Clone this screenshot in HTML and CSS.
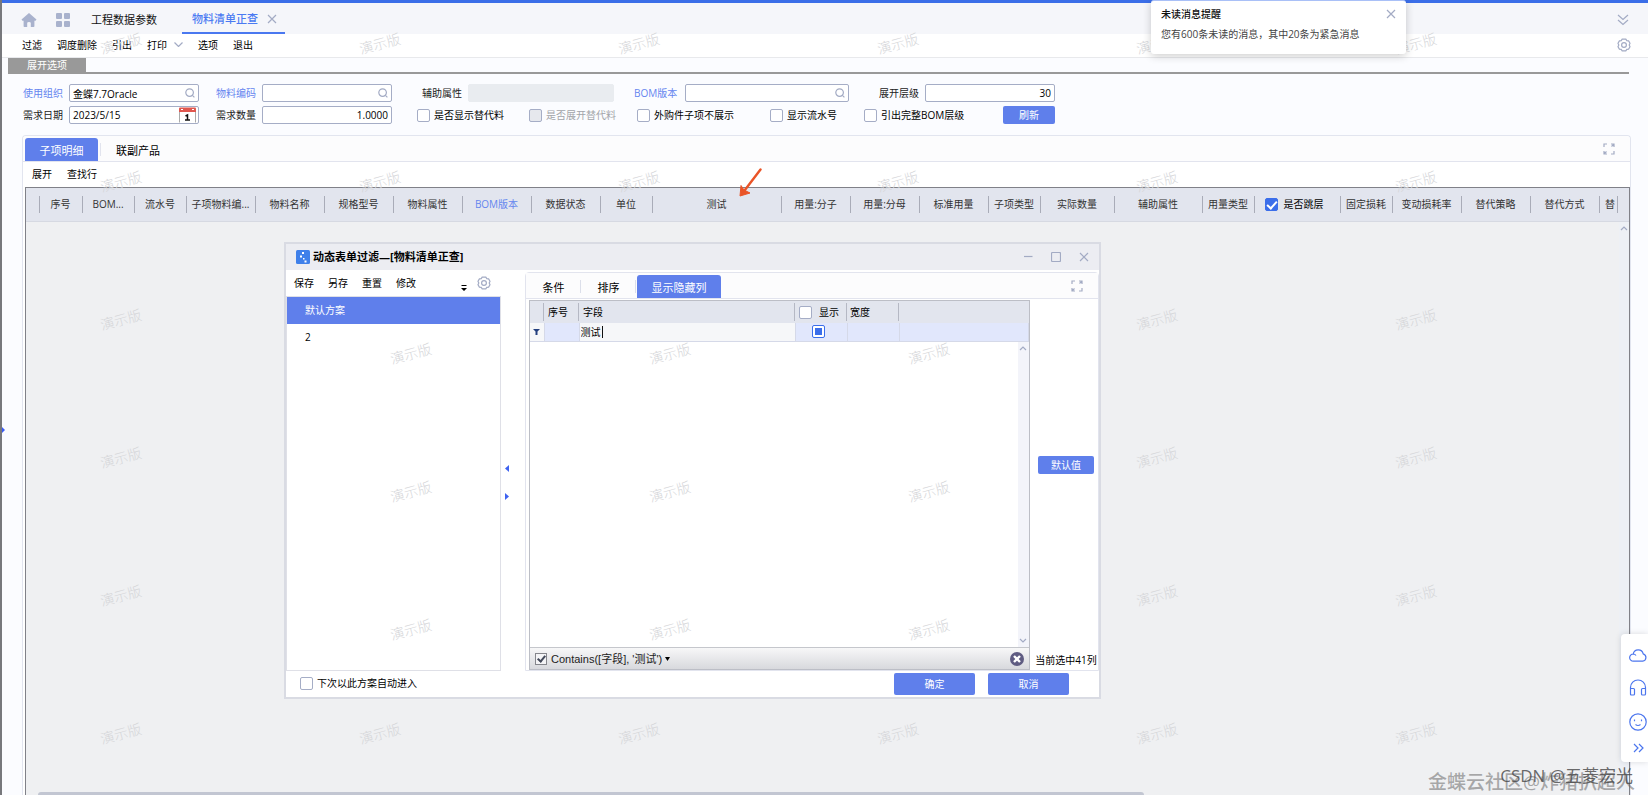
FILE: index.html
```html
<!DOCTYPE html>
<html lang="zh-CN">
<head>
<meta charset="utf-8">
<title>物料清单正查</title>
<link rel="stylesheet" href="styles.css">
</head>
<body>
<svg class="defs" aria-hidden="true">
  <symbol id="i-search" viewBox="0 0 10 10"><circle cx="4.6" cy="4.6" r="3.8"/><path d="M7.4 7.4 9.4 9.4"/></symbol>
  <symbol id="i-x" viewBox="0 0 10 10"><path d="M1 1 9 9M9 1 1 9"/></symbol>
  <symbol id="i-gear" viewBox="0 0 14 14"><path d="M5.2 1.2h3.6l1 1.5 1.8.2 1.4 2.4-.8 1.7.8 1.7-1.4 2.4-1.8.2-1 1.5H5.2l-1-1.5-1.8-.2L1 8.7 1.8 7 1 5.3l1.4-2.4 1.8-.2z"/><circle cx="7" cy="7" r="2.4"/></symbol>
  <symbol id="i-expand" viewBox="0 0 12 12"><path d="M1 4V1h3M8 1h3v3M11 1 8.500 3.500M1 8v3h3M1 11l2.500-2.500M8 11h3V8"/></symbol>
</svg>
<div class="app">
  <header class="tabbar">
    <button class="icon-btn home" aria-label="首页"><svg width="16" height="14" viewBox="0 0 16 14"><path d="M8 0 15.500 6.600 14.600 7.800H13.400V13.200Q13.400 14 12.600 14H9.800V10Q9.800 9 8 9T6.200 10V14H3.400Q2.600 14 2.600 13.200V7.800H1.400L.5 6.600z" fill="#a9b2cd"/></svg></button>
    <button class="icon-btn apps" aria-label="应用"><svg width="14" height="14" viewBox="0 0 14 14" fill="#a9b2cd"><rect width="6" height="6" rx="1"/><rect x="8" width="6" height="6" rx="1"/><rect y="8" width="6" height="6" rx="1"/><rect x="8" y="8" width="6" height="6" rx="1"/></svg></button>
    <a href="#" class="page-tab">工程数据参数</a>
    <div class="page-tab current"><a href="#">物料清单正查</a><button class="icon-btn" aria-label="关闭"><svg class="ln" width="10" height="10"><use href="#i-x"/></svg></button></div>
    <button class="icon-btn end" aria-label="收起"><svg class="ln" width="12" height="12" viewBox="0 0 12 12"><path d="M1 1l5 4.500L11 1M1 6l5 4.500L11 6"/></svg></button>
  </header>
  <nav class="toolbar">
    <button>过滤</button><button>调度删除</button><button>引出</button>
    <button class="menu">打印<svg class="ln" width="9" height="5" viewBox="0 0 9 5"><path d="M.5.5l4 4 4-4"/></svg></button>
    <button>选项</button><button>退出</button>
    <button class="icon-btn end" aria-label="设置"><svg class="ln" width="14" height="14"><use href="#i-gear"/></svg></button>
  </nav>
  <h2 class="section"><span>展开选项</span></h2>
  <form class="filters">
    <div class="field"><label class="link" for="org">使用组织</label><span class="box"><input id="org" value="金蝶7.7Oracle"><svg class="ln" width="10" height="10"><use href="#i-search"/></svg></span></div>
    <div class="field"><label class="link" for="code">物料编码</label><span class="box"><input id="code"><svg class="ln" width="10" height="10"><use href="#i-search"/></svg></span></div>
    <div class="field aux"><label for="aux">辅助属性</label><span class="box off"><input id="aux" disabled></span></div>
    <div class="field bom"><label class="link" for="bom">BOM版本</label><span class="box"><input id="bom"><svg class="ln" width="10" height="10"><use href="#i-search"/></svg></span></div>
    <div class="field level"><label for="lvl">展开层级</label><span class="box num"><input id="lvl" value="30"></span></div>
    <div class="field"><label for="date">需求日期</label><span class="box date"><input id="date" value="2023/5/15"><svg width="17" height="16" viewBox="0 0 17 16"><path d="M.5 4V15.500M16.500 4V15.500" stroke="#aaa" stroke-width="1"/><path d="M0 1.500Q0 .5 1 .5H16Q17 .5 17 1.500V5H0z" fill="#e0574f"/><path d="M2 2.500h2M13 2.500h2" stroke="#fff"/><path d="M6.500 9 8.500 8V13M6 13h5" stroke="#111" stroke-width="1.500" fill="none"/></svg></span></div>
    <div class="field"><label for="qty">需求数量</label><span class="box num"><input id="qty" value="1.0000"></span></div>
    <label class="check"><input type="checkbox">是否显示替代料</label>
    <label class="check off"><input type="checkbox" disabled>是否展开替代料</label>
    <label class="check"><input type="checkbox">外购件子项不展示</label>
    <label class="check"><input type="checkbox">显示流水号</label>
    <label class="check"><input type="checkbox">引出完整BOM层级</label>
    <button type="button" class="primary">刷新</button>
  </form>
  <main class="panel">
    <div class="panel-tabs"><button class="tab on">子项明细</button><button class="tab">联副产品</button>
      <button class="icon-btn end" aria-label="全屏"><svg class="ln" width="12" height="12"><use href="#i-expand"/></svg></button></div>
    <div class="panel-tools"><button>展开</button><button>查找行</button></div>
    <div class="sheet">
      <table class="cols">
        <colgroup><col class="w14"><col class="w43"><col class="w52"><col class="w52"><col class="w69"><col class="w69"><col class="w69"><col class="w69"><col class="w69"><col class="w69"><col class="w52"><col class="w129"><col class="w69"><col class="w69"><col class="w69"><col class="w52"><col class="w74"><col class="w88"><col class="w52"><col class="w86"><col class="w52"><col class="w69"><col class="w69"><col class="w69"><col class="w18"><col></colgroup>
        <thead><tr><th></th><th>序号</th><th>BOM...</th><th>流水号</th><th>子项物料编...</th><th>物料名称</th><th>规格型号</th><th>物料属性</th><th class="link">BOM版本</th><th>数据状态</th><th>单位</th><th>测试</th><th>用量:分子</th><th>用量:分母</th><th>标准用量</th><th>子项类型</th><th>实际数量</th><th>辅助属性</th><th>用量类型</th><th><label class="check"><input type="checkbox" checked>是否跳层</label></th><th>固定损耗</th><th>变动损耗率</th><th>替代策略</th><th>替代方式</th><th class="cut">替</th><th></th></tr></thead>
      </table>
      <div class="sheet-body">
        <div class="vscroll"><svg class="ln" width="8" height="5" viewBox="0 0 8 5"><path d="M1 4l3-3 3 3"/></svg></div>
        <div class="hscroll"></div>
      </div>
    </div>
  </main>
  <div class="marks page-marks" aria-hidden="true">
    <i>演示版</i><i>演示版</i><i>演示版</i><i>演示版</i><i>演示版</i><i>演示版</i>
    <i>演示版</i><i>演示版</i><i>演示版</i><i>演示版</i><i>演示版</i><i>演示版</i>
    <i>演示版</i><i>演示版</i><i>演示版</i><i>演示版</i><i>演示版</i><i>演示版</i>
    <i>演示版</i><i>演示版</i><i>演示版</i><i>演示版</i><i>演示版</i><i>演示版</i>
    <i>演示版</i><i>演示版</i><i>演示版</i><i>演示版</i><i>演示版</i><i>演示版</i>
    <i>演示版</i><i>演示版</i><i>演示版</i><i>演示版</i><i>演示版</i><i>演示版</i>
  </div>
  <svg class="edge-arrow" width="3" height="6" viewBox="0 0 3 6"><path d="M0 0 3 3 0 6z" fill="#3a5cf5"/></svg>
  <svg class="pointer" width="24" height="30" viewBox="0 0 24 30"><path d="M21.500 1.500 4 24.500" stroke="#ea5427" stroke-width="2.400" stroke-linecap="round"/><path d="M1 28 2 17.500 5 22 11 25z" fill="#ea5427" stroke="#ea5427" stroke-linejoin="round"/></svg>

  <section class="dialog" role="dialog" aria-label="动态表单过滤">
    <div class="title">
      <svg width="14" height="14" viewBox="0 0 14 14"><rect width="14" height="14" rx="1.500" fill="#3f80ea"/><path d="M6 2h2v2H6zM4 5.500h2v2H4zM7 8h1.500v1.500H7zM8.500 10.500h2v2h-2z" fill="#fff"/></svg>
      <h1>动态表单过滤—[物料清单正查]</h1>
      <div class="win">
        <button class="icon-btn" aria-label="最小化"><svg class="ln" width="10" height="10" viewBox="0 0 10 10"><path d="M1 4.500h8.500"/></svg></button>
        <button class="icon-btn" aria-label="最大化"><svg class="ln" width="10" height="10" viewBox="0 0 10 10"><rect x=".5" y=".5" width="9" height="9" rx="1"/></svg></button>
        <button class="icon-btn" aria-label="关闭"><svg class="ln" width="10" height="10"><use href="#i-x"/></svg></button>
      </div>
    </div>
    <div class="dialog-main">
      <aside class="schemes">
        <div class="scheme-tools"><button>保存</button><button>另存</button><button>重置</button><button>修改</button>
          <button class="icon-btn more" aria-label="更多"><svg width="6" height="6" viewBox="0 0 6 6"><path d="M.5 0h5v1h-5zM0 3h6L3 6z"/></svg></button>
          <button class="icon-btn" aria-label="设置"><svg class="ln" width="14" height="14"><use href="#i-gear"/></svg></button></div>
        <ul><li class="on">默认方案</li><li>2</li></ul>
      </aside>
      <div class="split"><svg width="4" height="7" viewBox="0 0 4 7"><path d="M4 0 0 3.500 4 7z"/></svg><svg width="4" height="7" viewBox="0 0 4 7"><path d="M0 0 4 3.500 0 7z"/></svg></div>
      <div class="config">
        <div class="config-tabs"><button>条件</button><button>排序</button><button class="on">显示隐藏列</button>
          <button class="icon-btn end" aria-label="全屏"><svg class="ln" width="12" height="12"><use href="#i-expand"/></svg></button></div>
        <div class="config-body">
          <div class="grid">
            <table>
              <colgroup><col class="w14"><col class="w35"><col class="w216"><col class="w52"><col class="w52"><col></colgroup>
              <thead><tr><th></th><th>序号</th><th>字段</th><th><label class="check"><input type="checkbox">显示</label></th><th>宽度</th><th></th></tr></thead>
              <tbody><tr><td class="plain"><svg width="7" height="6" viewBox="0 0 7 6"><path d="M0 0h7L4.500 2.500V6h-2V2.500z" fill="#24407f"/></svg></td><td></td><td class="plain"><div class="edit"><input class="cell" aria-label="字段" value="测试"><span class="caret"></span></div></td><td class="mid"><input type="checkbox" class="mixed" aria-label="显示"></td><td></td><td></td></tr></tbody>
            </table>
            <div class="grid-space"><div class="track"><svg class="ln" width="8" height="5" viewBox="0 0 8 5"><path d="M1 4l3-3 3 3"/></svg><svg class="ln" width="8" height="5" viewBox="0 0 8 5"><path d="M1 1l3 3 3-3"/></svg></div></div>
            <div class="grid-foot"><label><input type="checkbox" checked>Contains([字段], '测试')</label><svg width="5" height="4" viewBox="0 0 5 4"><path d="M0 0h5L2.500 4z"/></svg>
              <button class="icon-btn end" aria-label="清除"><svg width="14" height="14" viewBox="0 0 14 14"><circle cx="7" cy="7" r="7" fill="#5f5c82"/><path d="M4 4l6 6M10 4l-6 6" stroke="#fff" stroke-width="2.400"/></svg></button></div>
          </div>
          <div class="side"><button class="primary">默认值</button><p>当前选中41列</p></div>
        </div>
      </div>
    </div>
    <footer><label class="check"><input type="checkbox">下次以此方案自动进入</label><button class="primary">确定</button><button class="primary">取消</button></footer>
    <div class="marks dialog-marks" aria-hidden="true">
      <i>演示版</i><i>演示版</i><i>演示版</i><i>演示版</i><i>演示版</i><i>演示版</i><i>演示版</i><i>演示版</i><i>演示版</i>
    </div>
  </section>

  <aside class="notice">
    <h3>未读消息提醒</h3><button class="icon-btn" aria-label="关闭"><svg class="ln" width="10" height="10"><use href="#i-x"/></svg></button>
    <p>您有600条未读的消息，其中20条为紧急消息</p>
  </aside>
  <nav class="dock">
    <button class="icon-btn" aria-label="云"><svg width="18" height="14" viewBox="0 0 18 14"><path d="M5 13.200H4.300A3.600 3.600 0 0 1 4.200 6 5.100 5.100 0 0 1 14.200 5.800 3.800 3.800 0 0 1 13.700 13.200H5M4.200 6Q6 6 7 7.500"/></svg></button>
    <button class="icon-btn" aria-label="客服"><svg width="18" height="17" viewBox="0 0 18 17"><path d="M1.500 11V8.500a7.500 7.500 0 0 1 15 0V11M1.500 9.500H4.500Q5.500 9.500 5.500 10.500V15Q5.500 16 4.500 16H2.500Q1.500 16 1.500 15zM16.500 9.500H13.500Q12.500 9.500 12.500 10.500V15Q12.500 16 13.500 16H15.500Q16.500 16 16.500 15z"/></svg></button>
    <button class="icon-btn" aria-label="反馈"><svg width="18" height="18" viewBox="0 0 18 18"><circle cx="9" cy="9" r="8.200"/><path d="M5.500 6.500v1.800M12.500 6.500v1.800M6.500 11.500q2.500 2 5 0"/></svg></button>
    <button class="icon-btn last" aria-label="展开"><svg width="11" height="10" viewBox="0 0 11 10"><path d="M1 1l4 4-4 4M6 1l4 4-4 4"/></svg></button>
  </nav>
  <div class="credit back">金蝶云社区@炸猪扒超人</div>
  <div class="credit front">CSDN @五菱宏光</div>
</div>
</body>
</html>
```
FILE: styles.css
```css
* { box-sizing: border-box; }
body { margin: 0; overflow: hidden; font: 10px/14px "Open Sans", "Noto Sans CJK SC", sans-serif; color: #222; }
button, input { font: inherit; color: inherit; }
button { border: 0; background: none; padding: 0; white-space: nowrap; }
a { color: inherit; text-decoration: none; }
h1, h2, h3, p, ul { margin: 0; padding: 0; font-size: inherit; font-weight: normal; list-style: none; }
svg { flex: none; display: block; }
.defs { position: absolute; width: 0; height: 0; }
.ln { fill: none; stroke: #a3abc4; stroke-width: 1.2; }
.icon-btn { display: flex; align-items: center; justify-content: center; }
.end { margin-left: auto; }
.link { color: #6585ef; }

.app { position: relative; display: flex; flex-direction: column; height: 100vh; overflow: hidden; border-left: 2px solid #77787c; background: #fbfcff; }

.tabbar { display: flex; align-items: center; height: 34px; padding: 0 19px 0 20px; border-top: 3px solid #3b6ee8; background: #f5f6fa; font-size: 11px; }
.home { margin-left: -1px; }
.apps { margin: 0 21px 0 19px; }
.page-tab { display: flex; align-items: center; height: 31px; padding-top: 3px; white-space: nowrap; color: #111; }
.tabbar .icon-btn { margin-top: 3px; }
.page-tab.current { gap: 9px; margin-left: 25px; padding: 2px 8px 0 10px; border-bottom: 2px solid #4a78f0; color: #4a7af2; font-weight: 500; }
.page-tab.current .icon-btn { margin-top: 0; }

.toolbar { display: flex; align-items: center; gap: 15px; height: 24px; padding: 0 17px 2px 20px; background: #fff; border-bottom: 1px solid #e8e9ec; color: #000; }
.menu { display: flex; align-items: center; gap: 7px; }

.section { display: flex; height: 16px; margin: 0 19px 0 6px; border-bottom: 2px solid #999; color: #fff; }
.section span { height: 16px; padding: 0 19px; line-height: 15px; background: #999; }

.filters { display: grid; grid-template-columns: 193px 201px 112px 108px 133px 94px 139px 52px; gap: 4px 0; grid-auto-rows: 18px; padding: 10px 0 11px 21px; }
.field { display: flex; align-items: center; gap: 4px; width: 176px; }
.field label { width: 42px; white-space: nowrap; }
.field .box { flex: 1; display: flex; align-items: center; height: 18px; padding: 0 3px; border: 1px solid #a5adc6; border-radius: 2px; background: #fff; color: #000; }
.field .date { padding-left: 3px; padding-right: 2px; }
.field input { flex: 1; min-width: 0; width: 0; height: 16px; padding: 0; border: 0; background: none; outline: 0; }
.field .num input { text-align: right; }
.field .off { border-color: #e9ecf0; background: #e9ecf0; }
.aux { grid-column: 3 / 5; margin-left: 5px; width: 192px; }
.bom { grid-column: 5 / 7; margin-left: -3px; width: 215px; }
.bom label { width: 47px; }
.level { grid-column: 7 / 9; margin-left: 15px; }

.check { display: flex; align-items: center; gap: 4px; white-space: nowrap; color: #000; }
.check.off { color: #a2a4a9; }
.check input, .mixed { appearance: none; flex: none; position: relative; width: 13px; height: 13px; margin: 0; border: 1px solid #a5adc6; border-radius: 2px; background: #fff; }
.check input:disabled { background: #e6e8ed; }
.check input:checked { border-color: #3b6eea; background: #3b6eea; }
.check input:checked::after { content: ""; position: absolute; left: 3px; top: 0; width: 4px; height: 8px; border: solid #fff; border-width: 0 2px 2px 0; transform: rotate(42deg); }
.primary { height: 18px; border-radius: 2px; background: #5f7feb; color: #fff; }

.panel { flex: 1; display: flex; flex-direction: column; margin: 0 17px 0 20px; border: 1px solid #e2e5ef; border-bottom: 0; border-radius: 4px 4px 0 0; background: #fff; }
.panel-tabs { display: flex; align-items: flex-end; height: 26px; padding: 0 15px 0 2px; border-bottom: 1px solid #e2e4ee; background: #fcfcfd; border-radius: 4px 4px 0 0; font-size: 11px; }
.panel-tabs .icon-btn { align-self: center; }
.tab { height: 23px; padding: 3px 14px 0; color: #000; }
.tab.on { width: 73px; border-radius: 3px 3px 0 0; background: #5f7feb; color: #fff; }
.tab + .tab { margin-left: 2px; padding: 3px 16px 0; background: linear-gradient(#e2e4ee, #e2e4ee) left center / 1px 13px no-repeat; }
.panel-tools { display: flex; align-items: center; gap: 15px; height: 25px; padding: 0 9px 2px; color: #000; }

.sheet { flex: 1; display: flex; flex-direction: column; margin: 0 0 0 2px; border: 1px solid #808188; border-bottom: 0; background: #eff0f2; }
.cols { width: 100%; table-layout: fixed; border-collapse: collapse; background: #e2e5ee; }
.cols th { height: 33px; padding: 0 2px 0 0; overflow: hidden; border-bottom: 1px solid #d6d9e2; background: linear-gradient(#a9acb8, #a9acb8) right center / 1px 17px no-repeat; font-weight: normal; white-space: nowrap; color: #333; }
.cols th:last-child { background: none; }
.cols th.link { color: #6585ef; }
.cols th.cut { text-align: left; padding: 0 0 0 5px; }
.cols .check { justify-content: center; gap: 6px; padding-right: 6px; color: #000; }
.w14 { width: 14px; } .w18 { width: 18px; } .w35 { width: 35px; } .w43 { width: 43px; } .w52 { width: 52px; }
.w69 { width: 69px; } .w74 { width: 74px; } .w86 { width: 86px; } .w88 { width: 88px; }
.w129 { width: 129px; } .w216 { width: 216px; }
.sheet-body { flex: 1; display: flex; flex-direction: column; }
.vscroll { flex: 1; align-self: flex-end; width: 10px; padding: 4px 1px; background: #edf0f5; }
.hscroll { width: 69%; height: 3px; margin-left: 12px; border-radius: 3px 3px 0 0; background: #c2c6d2; }

.marks { position: absolute; display: grid; grid-auto-rows: 138px; overflow: hidden; pointer-events: none; }
.marks i { width: 48px; height: 24px; line-height: 24px; text-align: center; font-size: 14px; font-style: normal; font-weight: 300; color: #d5d6d9; transform: rotate(-15deg); }
.page-marks { left: 87px; right: 0; top: 24px; bottom: 0; padding: 8px 0 0 8px; grid-template-columns: repeat(6, 259px); }
.edge-arrow { position: absolute; left: 0; top: 427px; }
.pointer { position: absolute; left: 737px; top: 168px; }

.dialog { position: absolute; left: 282px; top: 242px; width: 817px; border: 2px solid #d9dbe3; background: #fff; }
.title { display: flex; align-items: center; gap: 3px; height: 26px; padding: 0 10px; background: #ecedf2; }
.title h1 { font-size: 11px; font-weight: bold; color: #000; }
.win { display: flex; gap: 18px; margin-left: auto; }
.dialog-main { display: flex; height: 401px; }
.schemes { display: flex; flex-direction: column; width: 215px; color: #000; }
.scheme-tools { display: flex; align-items: center; gap: 14px; height: 26px; padding: 0 10px 0 8px; }
.more { margin: 10px -4px 0 auto; }
.schemes ul { flex: 1; border: 1px solid #dfe0e7; }
.schemes li { height: 27px; padding-left: 18px; line-height: 27px; }
.schemes li.on { background: #5f7feb; color: #fff; }
.split { display: flex; flex-direction: column; justify-content: center; align-items: center; gap: 21px; width: 12px; padding-top: 24px; fill: #3f62f0; }
.config { flex: 1; display: flex; flex-direction: column; margin: 2px 0 0 12px; border: 1px solid #e2e4ee; border-radius: 4px 4px 0 0; }
.config-tabs { display: flex; align-items: flex-end; height: 26px; padding-right: 15px; border-bottom: 1px solid #e2e4ee; background: #fcfcfd; font-size: 11px; color: #000; }
.config-tabs button:not(.icon-btn) { width: 55px; height: 23px; padding-top: 2px; background: linear-gradient(#dcdfea, #dcdfea) right center / 1px 13px no-repeat; }
.config-tabs button.on:not(.icon-btn) { width: 84px; margin-left: 1px; border-radius: 3px 3px 0 0; background: #5f7feb; color: #fff; }
.config-tabs .icon-btn { align-self: center; }
.config-body { flex: 1; display: flex; padding: 1px 0 0 3px; }
.grid { flex: 1; display: flex; flex-direction: column; border: 1px solid #bcbec6; }
.grid table { width: 100%; table-layout: fixed; border-collapse: collapse; }
.grid th { height: 22px; padding: 0 4px; background: linear-gradient(#b5b8c4, #b5b8c4) right center / 1px 18px no-repeat #e2e5ee; text-align: left; font-weight: normal; white-space: nowrap; color: #000; }
.grid th:last-child { background: #e2e5ee; }
.grid .check { gap: 7px; }
.grid th:nth-child(5) { padding-left: 3px; }
.grid td { height: 18px; padding: 0; border: solid #d5d9e8; border-width: 0 1px 1px 0; background: #e1e7fc; }
.grid td.plain { background: #f6f7f9; }
.grid td svg { margin: auto; }
.edit { display: flex; align-items: center; height: 16px; padding-left: 1px; color: #000; }
.cell { width: 21px; height: 16px; padding: 0; border: 0; background: none; outline: 0; }
.caret { width: 1px; height: 12px; background: #111; }
.grid td.mid { padding-right: 6px; }
.mixed { display: block; margin: 0 auto; border-color: #3b6eea; }
.mixed::after { content: ""; position: absolute; inset: 2px; background: #3b6eea; }
.grid-space { flex: 1; display: flex; justify-content: flex-end; }
.track { display: flex; flex-direction: column; justify-content: space-between; width: 11px; padding: 4px 1px; background: #f3f4fa; }
.grid-foot { display: flex; align-items: center; gap: 3px; height: 22px; padding: 0 5px; border-top: 1px solid #c5c7cc; background: linear-gradient(#f7f7f8, #d8d9dd); font: 11px/14px "Liberation Sans", "Noto Sans CJK SC", sans-serif; color: #222; }
.grid-foot label { display: flex; align-items: center; gap: 4px; }
.grid-foot input { appearance: none; position: relative; width: 12px; height: 12px; margin: 0; border: 1px solid #85868c; background: #f4f4f6; }
.grid-foot input::after { content: ""; position: absolute; left: 3px; top: 0; width: 3px; height: 6px; border: solid #444a5a; border-width: 0 2px 2px 0; transform: rotate(40deg); }
.side { display: flex; flex-direction: column; justify-content: flex-end; align-items: center; gap: 179px; width: 68px; padding: 0 0 3px 4px; color: #000; }
.side .primary { width: 56px; }
.side p { white-space: nowrap; }
.dialog footer { display: flex; align-items: center; gap: 13px; height: 26px; padding: 0 30px 0 14px; }
.dialog footer .check { margin: 0 auto 2px 0; }
.dialog footer .primary { width: 81px; height: 22px; }
.dialog-marks { left: 93px; right: 0; top: 90px; height: 340px; padding: 8px 0 0 8px; grid-template-columns: repeat(3, 259px); }

.notice { position: absolute; right: 242px; top: 0; display: grid; grid-template-columns: 1fr auto; align-content: start; gap: 6px; width: 255px; height: 54px; padding: 6px 10px; border-top: 1px solid #a9c0f7; border-radius: 3px; background: #fff; box-shadow: 0 2px 8px #0003; color: #444; }
.notice h3 { font-weight: 500; color: #111; }
.notice p { grid-column: 1 / 3; white-space: nowrap; }
.dock { position: absolute; right: 0; top: 634px; display: flex; flex-direction: column; align-items: center; gap: 17px; width: 27px; padding: 14px 0 9px 7px; border-radius: 4px 0 0 4px; background: #fff; box-shadow: 0 0 6px #0002; }
.dock .last { margin-top: -5px; }
.dock svg { fill: none; stroke: #4c76ee; stroke-width: 1.2; }
.credit { position: absolute; white-space: nowrap; pointer-events: none; }
.back { right: 13px; bottom: 0; font-size: 19px; line-height: 26px; font-weight: 500; color: #6668; }
.front { right: 15px; bottom: 6px; font-size: 17px; line-height: 26px; font-weight: 400; color: #444c; }
```
